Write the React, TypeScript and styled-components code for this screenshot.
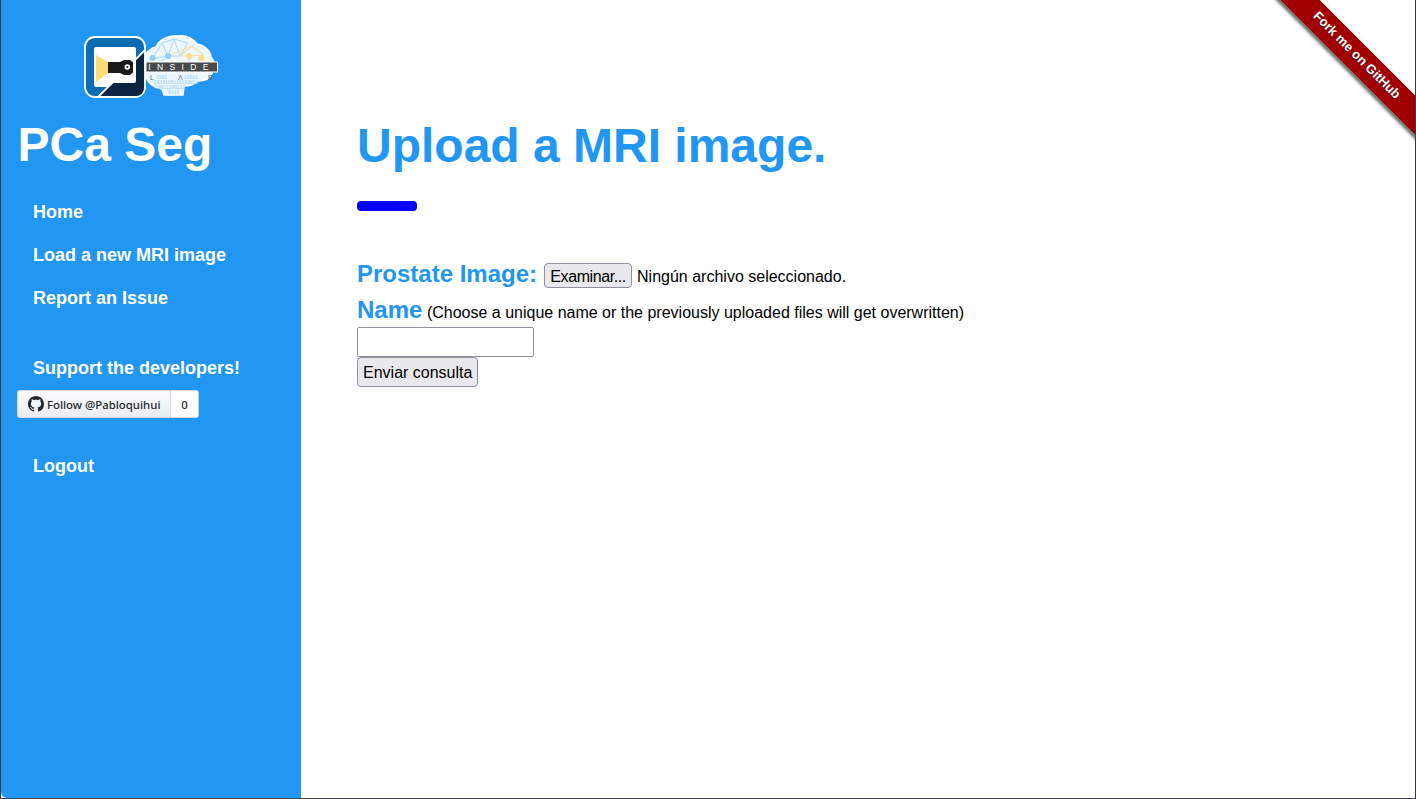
import React from "react";
import styled, { createGlobalStyle } from "styled-components";

const Global = createGlobalStyle`
  html, body { margin: 0; padding: 0; height: 100%; background: #fff; }
  body { font-family: "Liberation Sans", Arial, sans-serif; font-size: 16px; color: #000; }
  a { text-decoration: none; color: inherit; }
`;

const Frame = styled.div`
  box-sizing: border-box;
  width: 1416px;
  height: 799px;
  display: flex;
  position: relative;
  overflow: hidden;
  border-left: 1px solid #3a3a44;
  border-right: 1px solid #3a3a44;
  border-bottom: 1px solid #4a4450;
`;

const Sidebar = styled.aside`
  box-sizing: border-box;
  width: 300px;
  flex: none;
  background: #2196f3;
  border-bottom-left-radius: 6px;
  padding: 35px 0 0 16px;
  color: #fff;
`;

const LogoWrap = styled.div`
  margin-left: 67px;
  width: 134px;
  height: 64px;
`;

const Brand = styled.h1`
  margin: 17px 0 0 0.5px;
  font-size: 48px;
  line-height: 57px;
  font-weight: 700;
`;

const Nav = styled.nav`
  margin-top: 18px;
  padding-left: 16px;
  display: flex;
  flex-direction: column;
`;

const LogoutNav = styled.div`
  padding-left: 16px;
`;

const NavLink = styled.a<{ $gap?: number }>`
  display: block;
  margin-top: ${(p) => p.$gap ?? 0}px;
  height: 43px;
  line-height: 43px;
  font-size: 18px;
  font-weight: 700;
  color: #fff;
`;

const FollowGroup = styled.div`
  display: flex;
  width: 182px;
  height: 28px;
  margin: 0 0 27px 0;
  font-family: "Noto Sans", "Open Sans", sans-serif;
  font-size: 11.4px;
  font-weight: 500;
  color: #24292e;
`;

const FollowBtn = styled.a`
  box-sizing: border-box;
  flex: 1;
  display: flex;
  align-items: center;
  gap: 3px;
  padding-left: 10px;
  white-space: nowrap;
  color: #24292e;
  background: linear-gradient(#fafbfc, #eaeef2);
  border: 1px solid #d3d6da;
  border-right: none;
  border-radius: 3px 0 0 3px;
`;

const FollowCount = styled.span`
  box-sizing: border-box;
  width: 29px;
  display: flex;
  align-items: center;
  justify-content: center;
  background: #fff;
  border: 1px solid #d3d6da;
  border-radius: 0 3px 3px 0;
`;

const Main = styled.main`
  flex: 1;
  padding: 0 0 0 56px;
`;

const Title = styled.h2`
  margin: 117px 0 0;
  font-size: 48px;
  line-height: 57px;
  font-weight: 700;
  color: #2196f3;
`;

const Bar = styled.div`
  width: 60px;
  height: 10px;
  margin-top: 27px;
  background: #0000ff;
  border-radius: 4px;
`;

const Form = styled.form`
  margin-top: 46px;
  display: flex;
  flex-direction: column;
  align-items: flex-start;
`;

const Row = styled.div<{ $height: number }>`
  display: flex;
  align-items: baseline;
  height: ${(p) => p.$height}px;
`;

const FieldLabel = styled.label`
  font-size: 24px;
  line-height: 34px;
  font-weight: 700;
  color: #2196f3;
`;

const NativeButton = styled.button`
  box-sizing: border-box;
  padding: 1px 5px 0;
  background: #e9e9ed;
  border: 1px solid #8f8f9d;
  border-radius: 4px;
  color: #000;
  font-family: "Liberation Sans", Arial, sans-serif;
  font-size: 16px;
`;

const BrowseButton = styled(NativeButton)`
  width: 88px;
  height: 25px;
  margin-left: 7px;
  padding: 4px 0 0;
  letter-spacing: -0.42px;
  white-space: nowrap;
`;

const FileName = styled.span`
  margin-left: 5px;
`;

const Hint = styled.span`
  margin-left: 4.5px;
`;

const TextInput = styled.input`
  box-sizing: border-box;
  width: 177px;
  height: 30px;
  margin: 0;
  padding: 1px 4px;
  background: #fff;
  border: 1px solid #8f8f9d;
  border-radius: 2px;
  font-size: 16px;
`;

const SubmitButton = styled(NativeButton)`
  height: 30px;
`;

const RibbonClip = styled.div`
  position: absolute;
  top: 0;
  right: 0;
  width: 142px;
  height: 145px;
  overflow: hidden;
  pointer-events: none;
`;

const Ribbon = styled.a`
  position: absolute;
  top: 41px;
  left: -29px;
  box-sizing: border-box;
  width: 224px;
  height: 30px;
  transform: rotate(45deg);
  background: #a00000;
  box-shadow: 0 2px 3px rgba(0, 0, 0, 0.6);
  color: #fff;
  font-size: 13px;
  font-weight: 700;
  line-height: 26px;
  text-align: center;
  text-shadow: 0 1px 1px rgba(0, 0, 0, 0.5);
  border-top: 1px dotted rgba(255, 255, 255, 0.25);
  border-bottom: 1px dotted rgba(255, 255, 255, 0.25);
  background-clip: padding-box;
`;

const Logo = () => (
  <svg width="134" height="64" viewBox="0 0 134 64" style={{ display: "block", overflow: "visible" }}>
    {/* brain */}
    <path
      d="M60 26 C61 17 67 13 72 12 C75 5 84 0 94 1 C102 0 109 4 113 9 C120 10 126 15 127 22 C131 26 131 33 128 38 C126 44 120 46 114 46 C110 50 104 51 100 51 L99 60 L80 60 L78 54 C70 53 64 48 62 42 C60 38 59 33 60 26 Z"
      fill="#eef7fe"
      stroke="#ffffff"
      strokeWidth="1.6"
    />
    <g stroke="#a9d8f7" strokeWidth="1" fill="none">
      <path d="M68 24 L84 21 L96 21" />
      <path d="M68 24 L78 8 L84 21 L90 4 L96 21" />
      <path d="M78 8 L90 4 L104 8 L96 21" />
      <path d="M68 24 L62 30 M84 21 L72 30" />
    </g>
    <g stroke="#f6dd94" strokeWidth="1" fill="none">
      <path d="M84 21 L108 11 L120 20 L106 21 L96 21 L108 11" />
      <path d="M117 22 L124 28 M106 21 L104 28" />
    </g>
    <circle cx="68.5" cy="23" r="3" fill="#8fd0fa" />
    <circle cx="84" cy="21" r="3" fill="#8fd0fa" />
    <circle cx="105.5" cy="21" r="3" fill="#fbdf8d" />
    <circle cx="117" cy="23" r="3" fill="#fbdf8d" />
    <rect x="62" y="27" width="71.5" height="10" fill="#4a4a4c" stroke="#ffffff" strokeWidth="1" />
    <text x="97.5" y="35" textAnchor="middle" fontFamily="Liberation Sans, sans-serif" fontSize="8.5" letterSpacing="6.4" fill="#ffffff">
      INSIDE
    </text>
    <g fontFamily="Liberation Mono, monospace" fontSize="4.6" fill="#8fcdf7">
      <text x="72" y="43.5">1001</text>
      <text x="100" y="43.5">10011</text>
      <text x="70" y="48.5">0110100110110011</text>
      <text x="71" y="53.5">10011100110</text>
      <text x="84" y="58.5">0110</text>
    </g>
    <g fontFamily="Liberation Sans, sans-serif" fontSize="7" fill="#56677a">
      <text x="66" y="45">L</text>
      <text x="94" y="45">Λ</text>
      <text x="124" y="45">B</text>
    </g>

    {/* camera tile */}
    <rect x="1" y="2" width="60" height="60" rx="10" fill="#0b6db0" stroke="#ffffff" strokeWidth="1.8" />
    <path d="M60 16 L60 52 Q60 61 51 61 L16 61 Z" fill="#0b2340" />
    <path d="M61 15 L14 62" stroke="#ffffff" strokeWidth="1.8" />
    <path d="M12 12 Q10 12 10 14 L10 50 Q10 52 12 52 L24 52 L52 24 L52 14 Q52 12 50 12 Z" fill="#ffffff" />
    <path d="M52 24 L52 46 Q52 48 50 48 L28 48 Z" fill="#ffffff" />
    <path d="M12 20 L24 27 L24 38 L12 47 Z" fill="#fcdc74" />
    <rect x="24" y="27" width="12" height="11" fill="#1a1a1a" />
    <path d="M36 27 L40 25 L46 25 L49 27.5 L49 37.5 L46 40 L40 40 L36 38 Z" fill="#1a1a1a" />
    <circle cx="43.3" cy="32" r="2.8" fill="#ffffff" />
    <circle cx="43.3" cy="32" r="1" fill="#1a1a1a" />
  </svg>
);

const GithubMark = () => (
  <svg width="16" height="16" viewBox="0 0 16 16" fill="#24292e">
    <path d="M8 0C3.58 0 0 3.58 0 8c0 3.54 2.29 6.53 5.47 7.59.4.07.55-.17.55-.38 0-.19-.01-.82-.01-1.49-2.01.37-2.53-.49-2.69-.94-.09-.23-.48-.94-.82-1.13-.28-.15-.68-.52-.01-.53.63-.01 1.08.58 1.23.82.72 1.21 1.87.87 2.33.66.07-.52.28-.87.51-1.07-1.78-.2-3.64-.89-3.64-3.95 0-.87.31-1.59.82-2.15-.08-.2-.36-1.02.08-2.12 0 0 .67-.21 2.2.82.64-.18 1.32-.27 2-.27.68 0 1.36.09 2 .27 1.53-1.04 2.2-.82 2.2-.82.44 1.1.16 1.92.08 2.12.51.56.82 1.27.82 2.15 0 3.07-1.87 3.75-3.65 3.95.29.25.54.73.54 1.48 0 1.07-.01 1.93-.01 2.2 0 .21.15.46.55.38A8.013 8.013 0 0016 8c0-4.42-3.58-8-8-8z" />
  </svg>
);

export default function App() {
  return (
    <>
      <Global />
      <Frame>
        <Sidebar>
          <LogoWrap>
            <Logo />
          </LogoWrap>
          <Brand>PCa Seg</Brand>
          <Nav>
            <NavLink href="#">Home</NavLink>
            <NavLink href="#">Load a new MRI image</NavLink>
            <NavLink href="#">Report an Issue</NavLink>
            <NavLink href="#" $gap={27}>Support the developers!</NavLink>
          </Nav>
          <FollowGroup>
            <FollowBtn href="#">
              <GithubMark />
              Follow @Pabloquihui
            </FollowBtn>
            <FollowCount>0</FollowCount>
          </FollowGroup>
          <LogoutNav>
            <NavLink href="#">Logout</NavLink>
          </LogoutNav>
        </Sidebar>
        <Main>
          <Title>Upload a MRI image.</Title>
          <Bar />
          <Form onSubmit={(e) => e.preventDefault()}>
            <Row $height={36}>
              <FieldLabel>Prostate Image:</FieldLabel>
              <BrowseButton type="button">Examinar...</BrowseButton>
              <FileName>Ningún archivo seleccionado.</FileName>
            </Row>
            <Row $height={34}>
              <FieldLabel>Name</FieldLabel>
              <Hint>(Choose a unique name or the previously uploaded files will get overwritten)</Hint>
            </Row>
            <TextInput type="text" />
            <SubmitButton type="submit">Enviar consulta</SubmitButton>
          </Form>
        </Main>
        <RibbonClip>
          <Ribbon href="#">Fork me on GitHub</Ribbon>
        </RibbonClip>
      </Frame>
    </>
  );
}
